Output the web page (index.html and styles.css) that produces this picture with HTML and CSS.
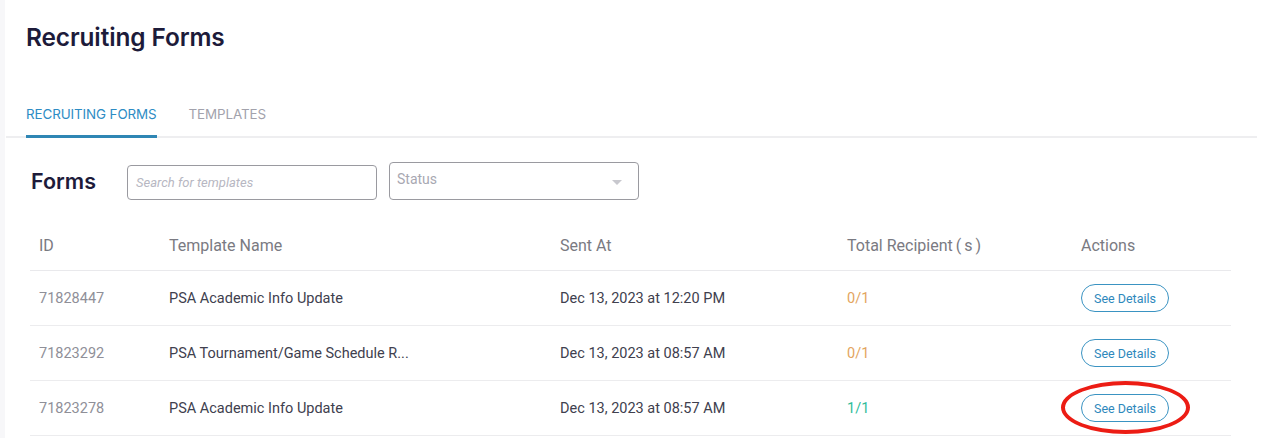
FILE: index.html
```html
<!DOCTYPE html>
<html>
<head>
<meta charset="utf-8">
<link rel="stylesheet" href="styles.css">
</head>
<body>
<div class="page">
  <h1 class="title">Recruiting Forms</h1>
  <div class="tabs">
    <div class="tab active">RECRUITING FORMS</div>
    <div class="tab">TEMPLATES</div>
  </div>
  <div class="toolbar">
    <h2 class="forms">Forms</h2>
    <div class="search">Search for templates</div>
    <div class="select"><span>Status</span><span class="caret"></span></div>
  </div>
  <div class="table">
    <div class="row head">
      <div class="c id">ID</div>
      <div class="c name">Template Name</div>
      <div class="c sent">Sent At</div>
      <div class="c total">Total Recipient<span class="paren">(</span>s<span class="paren">)</span></div>
      <div class="c act">Actions</div>
    </div>
    <div class="row">
      <div class="c id">71828447</div>
      <div class="c name">PSA Academic Info Update</div>
      <div class="c sent">Dec 13, 2023 at 12:20 PM</div>
      <div class="c total pending">0/1</div>
      <div class="c act"><span class="btn">See Details</span></div>
    </div>
    <div class="row">
      <div class="c id">71823292</div>
      <div class="c name">PSA Tournament/Game Schedule R...</div>
      <div class="c sent">Dec 13, 2023 at 08:57 AM</div>
      <div class="c total pending">0/1</div>
      <div class="c act"><span class="btn">See Details</span></div>
    </div>
    <div class="row">
      <div class="c id">71823278</div>
      <div class="c name">PSA Academic Info Update</div>
      <div class="c sent">Dec 13, 2023 at 08:57 AM</div>
      <div class="c total done">1/1</div>
      <div class="c act"><span class="btn circled">See Details<span class="ring"></span></span></div>
    </div>
  </div>
</div>
</body>
</html>
```
FILE: styles.css
```css
html, body { margin: 0; padding: 0; background: #fff; }
body {
  font-family: Roboto, "Liberation Sans", sans-serif;
  width: 1267px; height: 438px; overflow: hidden;
  border-left: 5px solid #f7f7f9; box-sizing: border-box;
}
.page { padding: 0 0 0 1px; }
.title {
  margin: 0; padding: 22px 0 0 20px;
  font-family: Inter, "Noto Sans", sans-serif;
  font-size: 24.4px; font-weight: 600; color: #1d1b3a;
  line-height: 30px; letter-spacing: -0.1px;
}
.tabs {
  display: flex; margin: 53px 10px 0 0;
  border-bottom: 2px solid #eeeef0;
  padding-left: 20px;
}
.tab {
  font-family: Inter, "Noto Sans", sans-serif;
  font-size: 13.4px; color: #a2a2ac; padding: 0 0 12px 0; margin-right: 32px;
  line-height: 18px; letter-spacing: -0.1px;
  margin-bottom: -2px; border-bottom: 3px solid transparent;
}
.tab.active { color: #2d8cc4; border-bottom-color: #2f86b4; }
.toolbar {
  display: flex; align-items: center;
  padding: 24px 0 0 25px; height: 38px;
}
.forms {
  margin: 0; width: 96px;
  font-family: Inter, "Noto Sans", sans-serif;
  font-size: 21.5px; font-weight: 600; color: #1d1b3a;
}
.search {
  width: 250px; height: 35px; box-sizing: border-box;
  border: 1px solid #9a9aa0; border-radius: 4px;
  font-style: italic; font-size: 13px; color: #b7b7c2;
  padding: 0 8px; display: flex; align-items: center;
  margin-top: 2px;
}
.select {
  margin-left: 12px;
  width: 250px; height: 38px; box-sizing: border-box;
  border: 1px solid #9a9aa0; border-radius: 4px;
  font-size: 14px; color: #a8a8b2;
  padding: 0 16px 0 7px; display: flex; align-items: center; justify-content: space-between;
  padding-bottom: 4px;
}
.caret {
  width: 0; height: 0; border-left: 5px solid transparent; border-right: 5px solid transparent;
  border-top: 5px solid #c8c8ce; margin-top: 6px;
}
.table { margin: 19px 36px 0 24px; }
.row {
  display: flex; align-items: center; height: 55px;
  border-bottom: 1px solid #ececee; box-sizing: border-box;
  font-size: 14.5px; color: #40404e; font-weight: 400;
}
.row.head { height: 52px; padding-top: 2px; font-size: 16px; color: #7a7a82; border-bottom-color: #e9e9ec; }
.c { box-sizing: border-box; white-space: nowrap; }
.id { width: 139px; padding-left: 9px; }
.row:not(.head) .id { color: #8f8f98; }
.name { width: 391px; }
.sent { width: 287px; }
.total { width: 234px; }
.paren { margin: 0 3px; }
.pending { color: #e3a55e; }
.done { color: #2ebc9a; }
.btn {
  position: relative; display: inline-flex; align-items: center; justify-content: center;
  width: 88px; height: 28px; box-sizing: border-box;
  border: 1px solid #3a93c2; border-radius: 14px;
  font-size: 12.5px; color: #2e88bc;
}
.ring {
  position: absolute; left: -21px; top: -14px; width: 129px; height: 53px;
  box-sizing: border-box; border: 4px solid #ec1c14; border-radius: 50%;
}
```
